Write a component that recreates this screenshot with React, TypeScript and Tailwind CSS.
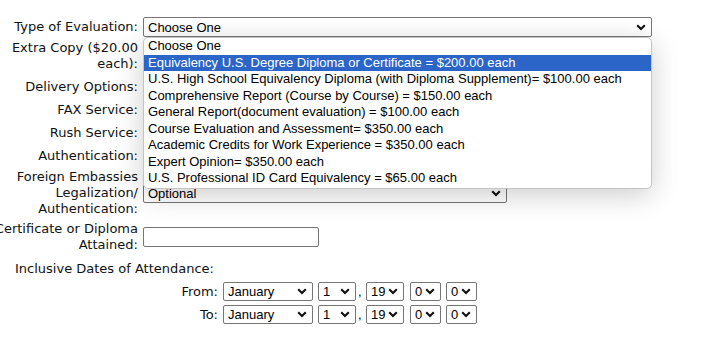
import React from 'react';

const labelFont = { fontFamily: '"DejaVu Sans", Verdana, sans-serif' };

const Chevron: React.FC = () => (
  <svg width="10" height="7" viewBox="0 0 10 7" className="shrink-0">
    <polyline points="1.2,1.2 5,5 8.8,1.2" fill="none" stroke="#111" strokeWidth="2.1" />
  </svg>
);

interface FakeSelectProps {
  value: string;
  className: string;
}

const FakeSelect: React.FC<FakeSelectProps> = ({ value, className }) => (
  <div
    className={`flex items-center justify-between bg-white border border-[#767676] rounded-[2px] pl-[4px] pr-[5px] text-[13px] text-black font-['Liberation_Sans',Arial,sans-serif] ${className}`}
  >
    <span className="whitespace-nowrap leading-none">{value}</span>
    <Chevron />
  </div>
);

const Label: React.FC<{ lines: string[] }> = ({ lines }) => (
  <div className="w-[138px] shrink-0 flex flex-col items-end text-[13px] leading-[16px] text-[#111]" style={labelFont}>
    {lines.map((l) => (
      <span key={l} className="whitespace-nowrap">{l}</span>
    ))}
  </div>
);

const options = [
  'Choose One',
  'Equivalency U.S. Degree Diploma or Certificate = $200.00 each',
  'U.S. High School Equivalency Diploma (with Diploma Supplement)= $100.00 each',
  'Comprehensive Report (Course by Course) = $150.00 each',
  'General Report(document evaluation) = $100.00 each',
  'Course Evaluation and Assessment= $350.00 each',
  'Academic Credits for Work Experience = $350.00 each',
  'Expert Opinion= $350.00 each',
  'U.S. Professional ID Card Equivalency = $65.00 each',
];

const DateRow: React.FC<{ label: string; className: string }> = ({ label, className }) => (
  <div className={`flex items-center ${className}`}>
    <div className="w-[218px] shrink-0 text-right text-[13px] text-[#111]" style={labelFont}>{label}</div>
    <FakeSelect value="January" className="ml-[5px] w-[90px] h-[19px]" />
    <FakeSelect value="1" className="ml-[5px] w-[38px] h-[19px]" />
    <span className="w-[10px] pl-[2px] text-[13px] font-['Liberation_Sans',Arial,sans-serif]">,</span>
    <FakeSelect value="19" className="w-[38px] h-[19px]" />
    <FakeSelect value="0" className="ml-[6px] w-[31px] h-[19px]" />
    <FakeSelect value="0" className="ml-[5px] w-[31px] h-[19px]" />
  </div>
);

export default function App() {
  return (
    <div className="w-[703px] h-[337px] bg-white overflow-hidden">
      <div className="pt-[17px]">
        {/* Type of Evaluation with its list open */}
        <div className="flex items-center h-[20px]">
          <Label lines={['Type of Evaluation:']} />
          <div className="relative ml-[5px]">
            <FakeSelect value="Choose One" className="w-[509px] h-[20px]" />
            <div className="absolute left-0 top-[20px] z-10 w-[509px] h-[152px] bg-white border border-[#c4c4c4] rounded-[5px] shadow-[0_6px_28px_rgba(0,0,0,0.2)] text-[13px] text-black font-['Liberation_Sans',Arial,sans-serif]">
              {options.map((o, i) => (
                <div
                  key={o}
                  className={`h-[16.5px] leading-[16.5px] pl-[4px] whitespace-nowrap ${i === 1 ? 'bg-[#2a65c7] text-white' : ''}`}
                >
                  {o}
                </div>
              ))}
            </div>
          </div>
        </div>

        {/* rows hidden under the open list */}
        <div className="flex items-center h-[38px]">
          <Label lines={['Extra Copy ($20.00', 'each):']} />
        </div>
        <div className="flex items-center h-[24px]">
          <Label lines={['Delivery Options:']} />
        </div>
        <div className="flex items-center h-[22px]">
          <Label lines={['FAX Service:']} />
        </div>
        <div className="flex items-center h-[24px]">
          <Label lines={['Rush Service:']} />
        </div>
        <div className="flex items-center h-[22px]">
          <Label lines={['Authentication:']} />
        </div>

        <div className="flex items-center h-[52px]">
          <Label lines={['Foreign Embassies', 'Legalization/', 'Authentication:']} />
          <FakeSelect value="Optional" className="ml-[5px] w-[364px] h-[19px]" />
        </div>

        <div className="flex items-center h-[36px]">
          <Label lines={['Certificate or Diploma', 'Attained:']} />
          <input
            type="text"
            className="ml-[5px] w-[176px] h-[20px] border border-[#767676] rounded-[2px] bg-white outline-none px-[3px] text-[13px]"
          />
        </div>

        <div className="h-[27px] flex items-center pl-[15px] text-[13px] text-[#111]" style={labelFont}>
          Inclusive Dates of Attendance:
        </div>

        <DateRow label="From:" className="h-[19px]" />
        <DateRow label="To:" className="h-[19px] mt-[4px]" />
      </div>
    </div>
  );
}
